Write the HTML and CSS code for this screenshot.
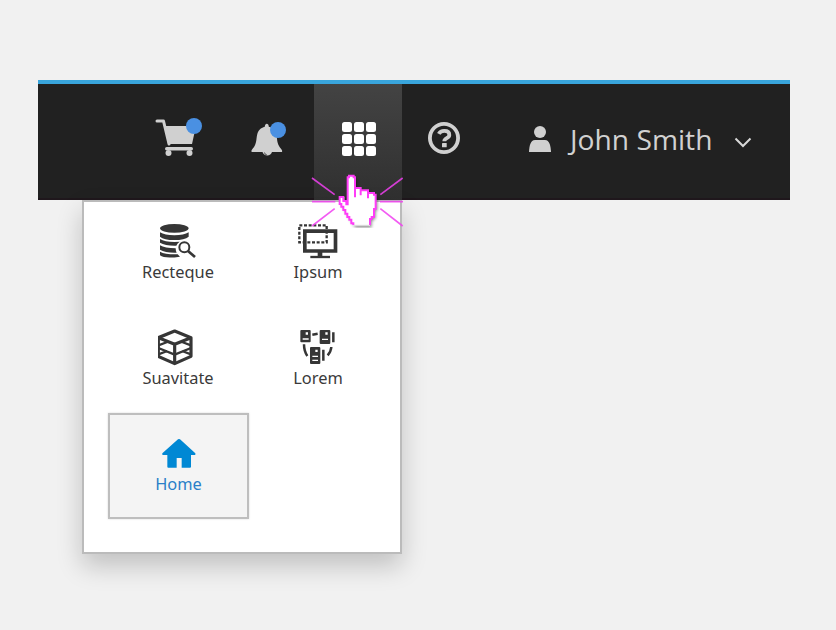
FILE: index.html
```html
<!DOCTYPE html>
<html lang="en">
<head>
<meta charset="utf-8">
<title>Application launcher</title>
<link rel="stylesheet" href="styles.css">
</head>
<body>
<header class="masthead">
  <nav class="tools">
    <a class="tool cart"><svg width="54" height="44" viewBox="0 0 54 44" fill="#d0d0d0">
      <path d="M7 7h6.500l5.500 23" fill="none" stroke="#d0d0d0" stroke-width="3" stroke-linecap="round" stroke-linejoin="round"/>
      <path d="M15 12h31l-4 18H18z"/><rect x="15" y="33" width="28" height="3.400" rx="1.700"/>
      <circle cx="18.500" cy="39" r="3"/><circle cx="39.500" cy="39" r="3"/><circle cx="44" cy="12" r="8" fill="#4a90e2"/></svg></a>
    <a class="tool bell"><svg width="44" height="44" viewBox="0 0 44 44" fill="#d0d0d0">
      <path d="M5.800 38c-1.500-1.500 1.500-3.500 2.800-6 2.500-5 1.500-8.500 3-13 1.300-4 5-5.700 7.200-6.300 0-4 4-4 4 0 3 .800 6.200 3 7.200 6.300 1.400 4.500.5 8 3 13 1.300 2.500 4.300 4.500 2.800 6z"/>
      <path d="M16.500 38a5 5 0 0 0 9.500 0z"/><path d="M18.500 38.500q.3 2.300 2.300 2.300" fill="none" stroke="#333" stroke-width=".8"/>
      <circle cx="32" cy="16" r="8" fill="#4a90e2"/></svg></a>
    <a class="tool active"><span class="waffle"><i></i><i></i><i></i><i></i><i></i><i></i><i></i><i></i><i></i></span></a>
    <a class="tool help"><svg width="34" height="34" viewBox="0 0 34 34"><circle cx="17" cy="17" r="14.100" fill="none" stroke="#d0d0d0" stroke-width="3.800"/>
      <path d="M11.800 12.900c1.200-2.300 3-3 5.500-3 3 0 5 1.500 5 4 0 3.500-5 3-5 6.300" fill="none" stroke="#d0d0d0" stroke-width="3.800"/><rect x="15" y="22" width="4.700" height="4.300" rx=".6" fill="#d0d0d0"/></svg></a>
  </nav>
  <a class="user">
    <svg width="22" height="26" viewBox="0 0 22 26" fill="#d0d0d0"><circle cx="11" cy="6" r="6"/><path d="M0 26c.3-6 1.500-12 6-12h10c4.500 0 5.700 6 6 12z"/></svg>
    <span class="name">John Smith</span>
    <svg class="caret" width="18" height="12" viewBox="0 0 18 12"><path d="M1.500 1.500 9 9l7.500-7.500" fill="none" stroke="#d8d8d8" stroke-width="2"/></svg>
  </a>
</header>
<div class="menu">
  <a class="app"><svg class="icon" viewBox="84 36 120 120" fill="#363636">
    <ellipse cx="133" cy="55" rx="43" ry="13"/>
    <path d="M90 67q14 9 43 9t43-9v13q-12 10-43 10t-43-10zM90 87q14 9 43 9l16-.5q-7 4-10 12-32 1-49-9zM90 106q14 9 47 9 0 8 3 13-34 1-50-9zM90 125q16 9 53 8l7 7q-46 7-60-4z"/>
    <circle cx="163" cy="112" r="15" fill="#fff" stroke="#363636" stroke-width="6"/><path d="m174 123 21 18" stroke="#363636" stroke-width="8"/></svg><span>Recteque</span></a>
  <a class="app"><svg class="icon" viewBox="84 36 120 120" fill="none" stroke="#363636">
    <path d="M104.500 63.500h92v59.500h-92z" stroke-width="11"/><path d="M121 141h59" stroke-width="7"/><path d="M150 126v15" stroke-width="14"/>
    <path d="M88 46h82v51H88z" stroke-width="7" stroke-dasharray="9 5"/></svg><span>Ipsum</span></a>
  <a class="app"><svg class="icon" viewBox="84 39 120 120" fill="none" stroke="#363636" stroke-width="9.500" stroke-linejoin="round">
    <path d="m134 48 49 20v56l-49 22-49-22V68z"/><path d="m85 68 49 20 49-20M134 88v57"/><path d="m85 99 49 20 49-20M85 91l27-10M183 91l-27-10M85 118l27-10m71 10-27-10" stroke-width="7"/></svg><span>Suavitate</span></a>
  <a class="app"><svg class="icon" viewBox="84 39 120 120" fill="none" stroke="#363636">
    <g fill="#363636" stroke="none"><rect x="91" y="45" width="31" height="37" rx="3"/><rect x="149" y="45" width="32" height="42" rx="3"/><rect x="120" y="96" width="31" height="51" rx="3"/></g>
    <g fill="#fff" stroke="none"><path d="M107 52h7v7h-7zM98 70h18v4H98zM166 52h7v7h-7zM156 71h18v4h-18zM136 104h7v7h-7zM127 122h17v4h-17zM127 134h17v4h-17z"/></g>
    <path d="m127 59 16-3M190 52v30M160 104v33M102 88q0 21 10 35M184 96q-1 14-11 25" stroke-width="7.500"/></svg><span>Lorem</span></a>
  <a class="app current"><svg class="icon" viewBox="189 87 120 120"><path d="M246 103q3-2 6 0l46 42q2 5-2 5h-11v35q0 3-3 3h-25v-29h-15v29h-25q-3 0-3-3v-35h-13q-4 0-2-5z" fill="#0088d4"/></svg><span>Home</span></a>
</div>
<svg class="pointer" width="94" height="56" viewBox="30 291 282 168">
  <g stroke="#f03ff0" stroke-opacity=".85" stroke-width="5" fill="none"><path d="m36 309 68 50M36 380h70M36 453l68-52M308 309l-67 50M240 380h69M308 453l-67-52"/></g>
  <path class="hand" d="M142 307h4v-5h14v5h5v32h17v7h22v8h18v5h5v43h-5v24h-6v6h-6v20h-50v-6h-6v-11h-6v-8h-6v-10h-6v-11h-6v-10h-5v-8h-5v-22h13v10h9v8h2z" fill="#fff"/>
  <path d="M160 450v-5h-6v-11h-6v-8h-6v-10h-6v-11h-6v-10h-6v-8h-5v-21h11v12h9v10h4v-81h4v-5h14v5h4v60M165 339h17v22M182 346h22v24M204 354h18v5h5v43h-5v24h-7v6h-5v18" fill="none" stroke="#ff3cf8" stroke-width="6"/>
  <path d="M161 451h48" stroke="#ccc" stroke-width="2"/>
</svg>
</body>
</html>
```

FILE: styles.css
```css
* { box-sizing: border-box; }
body {
  margin: 0;
  padding: 80px 46px 0 38px;
  height: 630px;
  overflow: hidden;
  position: relative;
  background: #f1f1f1;
  font-family: "Noto Sans", "Open Sans", sans-serif;
}
svg { display: block; flex: none; }
.masthead {
  display: flex;
  height: 120px;
  padding-left: 94px;
  border-top: 4px solid #39a5dc;
  background: #212121;
  box-shadow: inset 0 -2px #1f171c;
}
.tools { display: flex; }
.tool { display: flex; justify-content: center; width: 90px; }
.cart { padding-top: 30px; }
.cart svg { margin-left: 0; }
.bell { width: 92px; padding-top: 30px; }
.active { width: 88px; padding-top: 38px; background: linear-gradient(#434343, #303030); }
.help { width: 84px; padding-top: 37px; }
.waffle {
  display: grid;
  grid-template-columns: repeat(3, 10px);
  grid-auto-rows: 10px;
  gap: 2px;
  margin-left: 2px;
}
.waffle i { background: #fff; border-radius: 2.5px; }
.user { display: flex; align-items: flex-start; padding: 42px 0 0 43px; color: #d1d1d1; }
.name {
  width: 146px;
  margin: -7px 0 0 19px;
  font-family: "Open Sans", "Noto Sans", sans-serif;
  font-size: 28.2px;
  line-height: 40px;
  white-space: nowrap;
}
.caret { margin: 11px 0 0 18px; }
.menu {
  position: absolute;
  left: 82px;
  top: 200px;
  width: 320px;
  height: 354px;
  padding-left: 24px;
  border: 2px solid #bbb;
  background: #fff;
  display: grid;
  grid-template-columns: 140px 140px;
  grid-template-rows: repeat(3, 106px);
  align-content: start;
  box-shadow: 0 12px 24px rgba(0, 0, 0, .2);
}
.app {
  display: flex;
  flex-direction: column;
  align-items: center;
  height: 106px;
  padding-top: 20px;
  color: #3a3a3a;
  font-size: 16.4px;
  line-height: 19px;
}
.icon { width: 40px; height: 40px; }
.current {
  width: 141px;
  margin-top: -1px;
  padding-top: 19px;
  border: 2px solid #bebebe;
  background: #f4f4f4;
  color: #2a7fc8;
  line-height: 20px;
  box-shadow: 0 0 2px rgba(0, 0, 0, .15);
}
.pointer { position: absolute; left: 310px; top: 172px; }
.hand { filter: drop-shadow(5px 5px 4px rgba(0, 0, 0, .45)); }
```
